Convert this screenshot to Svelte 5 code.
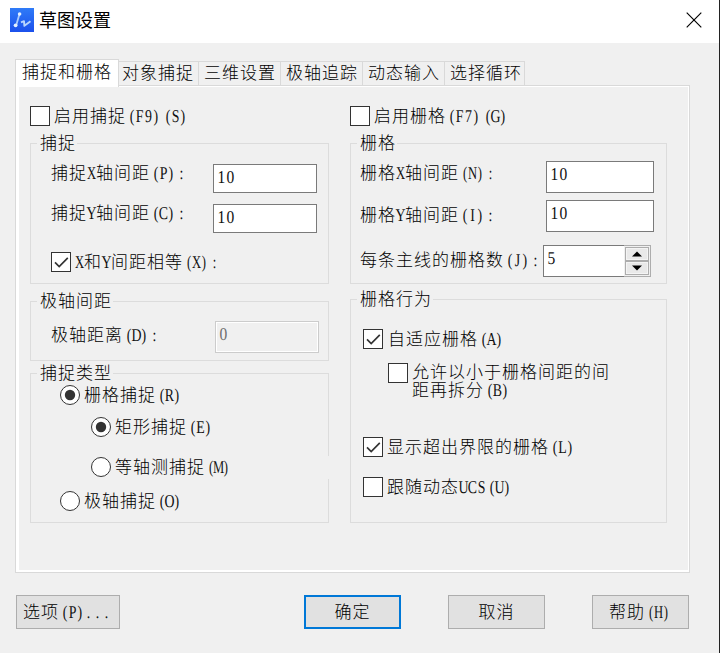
<script>
  const CELL = 9;
  let tabs = ['捕捉和栅格', '对象捕捉', '三维设置', '极轴追踪', '动态输入', '选择循环'];

  // Splits a caption into full-width and half-width runs
  const runs = (s) => s.match(/[\x20-\x7e]+|[^\x20-\x7e]+/g) ?? [];
  const half = (s) => /^[\x20-\x7e]/.test(s);
  const shift = { '(': 6, ')': 2.8, '.': 2.6 };
  // Digits are condensed less than the wider capitals
  const squeeze = (s) => (/^\d+$/.test(s) ? 0.86 : /[MHXN]/.test(s) ? 0.7 : 0.77);
  const xs = (s) => [...s].map((c, i) => ((i * CELL + (shift[c] ?? 4.5)) / squeeze(s)).toFixed(2)).join(' ');
</script>

{#snippet cap(s)}
  <span class="cap">{#each runs(s) as r}{#if half(r)}<svg class="half" width={r.length * CELL} height="18"><text transform="scale({squeeze(r)} 1)" x={xs(r)} y="15">{r}</text></svg>{:else}<span class="full">{r}</span>{/if}{/each}</span>
{/snippet}

{#snippet check(s, on)}
  <span class="box">{#if on}<svg width="18" height="18" viewBox="0 0 18 18"><path d="M3 9.3 7.2 13.5 15.8 4.9" fill="none" stroke="#333" stroke-width="1.7" /></svg>{/if}</span>
  {@render cap(s)}
{/snippet}

{#snippet radio(s, on)}
  <svg class="radio" width="20" height="20"><circle cx="10" cy="10" r="9.5" fill="#fff" stroke="#333" />{#if on}<circle cx="10" cy="10" r="5.2" fill="#333" />{/if}</svg>
  {@render cap(s)}
{/snippet}

<div class="window">
  <header>
    <svg class="logo" width="24" height="24" viewBox="0 0 24 24">
      <defs><linearGradient id="lg" x1="0" y1="0" x2="0" y2="1"><stop offset="0" stop-color="#2f7bf8" /><stop offset="1" stop-color="#1b50ec" /></linearGradient></defs>
      <rect width="24" height="24" fill="url(#lg)" />
      <path d="M9.5 6 6.2 17.2" stroke="#a9cafc" stroke-width="1.8" />
      <circle cx="9.6" cy="6" r="1.8" fill="#e4f1ff" /><circle cx="5.6" cy="17.3" r="1.9" fill="#e4f1ff" />
      <path d="M11 14.4 14 13.2 14.4 17.8 20.5 13.3" fill="none" stroke="#b8d5fd" stroke-width="1.9" stroke-linejoin="round" />
    </svg>
    <h1>草图设置</h1>
    <svg class="close" width="16" height="16" viewBox="0 0 16 16"><path d="M.7.7 15.3 15.3M15.3.7.7 15.3" stroke="#000" stroke-width="1.15" /></svg>
  </header>

  <nav>
    {#each tabs as t, i}
      <div class="tab" class:active={i === 0}>{@render cap(t)}</div>
    {/each}
  </nav>

  <main>
    <section class="left">
      <div class="row top">{@render check('启用捕捉(F9)(S)', false)}</div>

      <div class="group snap">
        <div class="legend">{@render cap('捕捉')}</div>
        <div class="row sx">{@render cap('捕捉X轴间距(P):')}<div class="input">{@render cap('10')}</div></div>
        <div class="row sy">{@render cap('捕捉Y轴间距(C):')}<div class="input">{@render cap('10')}</div></div>
        <div class="row eq">{@render check('X和Y间距相等(X):', true)}</div>
      </div>

      <div class="group polar">
        <div class="legend">{@render cap('极轴间距')}</div>
        <div class="row">{@render cap('极轴距离(D):')}<div class="input off">{@render cap('0')}</div></div>
      </div>

      <div class="group type">
        <div class="legend">{@render cap('捕捉类型')}</div>
        <div class="row r1">{@render radio('栅格捕捉(R)', true)}</div>
        <div class="row r2">{@render radio('矩形捕捉(E)', true)}</div>
        <div class="row r3">{@render radio('等轴测捕捉(M)', false)}</div>
        <div class="row r4">{@render radio('极轴捕捉(O)', false)}</div>
        <i class="gap"></i>
      </div>
    </section>

    <section class="right">
      <div class="row top">{@render check('启用栅格(F7)(G)', false)}</div>

      <div class="group grid">
        <div class="legend">{@render cap('栅格')}</div>
        <div class="row gx">{@render cap('栅格X轴间距(N):')}<div class="input">{@render cap('10')}</div></div>
        <div class="row gy">{@render cap('栅格Y轴间距(I):')}<div class="input">{@render cap('10')}</div></div>
        <div class="row gj">
          {@render cap('每条主线的栅格数(J):')}
          <div class="spin">
            <div class="value">{@render cap('5')}</div>
            <div class="arrows">
              <span><svg width="10" height="6"><path d="M0 5.5 5 .5 10 5.5Z" /></svg></span>
              <span><svg width="10" height="6"><path d="M0 .5 5 5.5 10 .5Z" /></svg></span>
            </div>
          </div>
        </div>
      </div>

      <div class="group behave">
        <div class="legend">{@render cap('栅格行为')}</div>
        <div class="row b1">{@render check('自适应栅格(A)', true)}</div>
        <div class="row b2">
          <span class="box"></span>
          <div class="lines">{@render cap('允许以小于栅格间距的间')}{@render cap('距再拆分(B)')}</div>
        </div>
        <div class="row b3">{@render check('显示超出界限的栅格(L)', true)}</div>
        <div class="row b4">{@render check('跟随动态UCS(U)', false)}</div>
      </div>
    </section>
  </main>

  <footer>
    <div class="btn opt">{@render cap('选项(P)...')}</div>
    <div class="btn ok">{@render cap('确定')}</div>
    <div class="btn">{@render cap('取消')}</div>
    <div class="btn last">{@render cap('帮助(H)')}</div>
  </footer>
</div>

<style>
  :global(body) { margin: 0; }
  * { box-sizing: border-box; }
  .window {
    width: 720px; height: 653px; background: #f0f0f0; overflow: hidden;
    border-right: 1px solid #222; display: flex; flex-direction: column;
    font-family: "Noto Sans CJK SC", sans-serif; color: #000;
  }
  header { height: 43px; flex: none; background: #fff; display: flex; align-items: center; padding: 0 17px 3px 10px; }
  h1 { margin: -2px auto 0 5px; font-size: 18px; font-weight: 400; line-height: 24px; }
  svg { display: block; flex: none; }

  .cap { display: inline-flex; align-items: center; height: 18px; flex: none; white-space: pre; }
  .full { font-size: 17px; font-weight: 300; letter-spacing: 1px; line-height: 18px; margin-top: -2px; color: #000; }
  .half { overflow: visible; }
  .half text { font: 18px "Liberation Serif", serif; text-anchor: middle; fill: #111; text-rendering: geometricPrecision; }

  nav { display: flex; align-items: flex-end; height: 43px; flex: none; padding-left: 15px; position: relative; z-index: 1; }
  .tab { height: 25px; width: 82px; border: 1px solid #d9d9d9; border-width: 1px 1px 0 0; padding: 2px 0 0 5px; display: flex; align-items: flex-start; }
  .tab:nth-child(2) { width: 80px; padding-left: 3px; }
  .tab:last-child { width: 80px; }
  .tab.active { width: 104px; height: 28px; background: #fff; border-left-width: 1px; padding: 3px 0 0 6px; margin-bottom: -1px; }

  main {
    width: 675px; height: 488px; flex: none; margin: -1px 0 0 15px; display: flex; padding: 20px 0 0 14px;
    border: 1px solid #d9d9d9; box-shadow: inset 3px 0 #fff, inset 0 1px #fff, inset -1px -2px #fff;
  }
  .left { width: 299px; }
  .right { width: 317px; margin-left: 21px; }
  .row { display: flex; align-items: center; }
  .top { height: 20px; gap: 4px; margin-bottom: 17px; }
  .box { width: 20px; height: 20px; border: 1px solid #333; background: #fff; flex: none; }

  .group { position: relative; border: 1px solid #dcdcdc; }
  .legend { position: absolute; top: -11px; left: 6px; height: 20px; background: #f0f0f0; padding: 1px 1px 0 3px; display: flex; }
  .input { border: 1px solid #7a7a7a; background: #fff; padding: 2px 0 0 3px; }

  .snap { height: 141px; }
  .snap .row { padding-left: 20px; }
  .snap .input { width: 104px; height: 29px; margin-left: auto; margin-right: 11px; }
  .sx { margin-top: 20px; align-items: flex-start; }
  .sy { margin-top: 11px; align-items: flex-start; }
  .eq { margin-top: 19px; gap: 4px; }

  .polar { height: 60px; margin-top: 17px; }
  .polar .row { margin-top: 19px; padding-left: 20px; align-items: flex-start; }
  .polar .row > :global(.cap) { margin-top: 5px; }
  .input.off { width: 104px; height: 32px; margin: 0 9px 0 auto; border-color: #ccc; background: #f0f0f0; box-shadow: inset 0 0 0 1px #fff; }
  .off :global(.half text) { fill: #6d6d6d; }

  .type { height: 150px; margin-top: 12px; }
  .type .row { gap: 4px; height: 20px; }
  .r1 { margin: 11px 0 0 29px; }
  .r2 { margin: 12px 0 0 60px; }
  .r3 { margin: 20px 0 0 60px; }
  .r4 { margin: 14px 0 0 29px; }
  .gap { position: absolute; right: -1px; top: 82px; width: 1px; height: 23px; background: #f0f0f0; }

  .grid { height: 141px; }
  .grid .row { padding-left: 9px; align-items: flex-start; }
  .grid .input { width: 108px; height: 32px; margin-left: auto; margin-right: 12px; }
  .gx { margin-top: 17px; }
  .gx > :global(.cap) { margin-top: 3px; }
  .gy { margin-top: 7px; }
  .gy > :global(.cap) { margin-top: 6px; }
  .gj { margin-top: 13px; }
  .gj > :global(.cap) { margin-top: 6px; }
  .spin { display: flex; width: 108px; height: 32px; margin: 0 15px 0 auto; }
  .value { flex: 1; background: #fff; border: 1px solid #7a7a7a; border-right: 0; padding: 2px 0 0 3px; }
  .arrows { width: 27px; border: 1px solid #adadad; border-left: 0; padding: 1px; display: flex; flex-direction: column; }
  .arrows span { flex: 1; border: 1px solid #adadad; background: #e9e9e9; box-shadow: inset 0 0 0 1px #f4f4f4; display: flex; align-items: center; justify-content: center; }

  .behave { height: 224px; margin-top: 15px; }
  .behave .row { gap: 4px; height: 20px; margin-left: 12px; }
  .behave .b1 { margin-top: 29px; gap: 5px; }
  .behave .b2 { margin: 14px 0 0 37px; align-items: flex-start; height: 36px; }
  .behave .b3 { margin-top: 38px; }
  .behave .b4 { margin-top: 20px; }
  .lines { display: flex; flex-direction: column; }

  footer { display: flex; margin: 22px 0 0 16px; }
  .btn { width: 97px; height: 34px; flex: none; margin-right: 47px; border: 1px solid #adadad; background: #e1e1e1; display: flex; align-items: center; justify-content: center; }
  .opt { width: 104px; margin-right: 184px; justify-content: flex-start; padding-left: 6px; }
  .ok { border: 2px solid #0078d7; }
  .last { margin-right: 0; }
</style>
